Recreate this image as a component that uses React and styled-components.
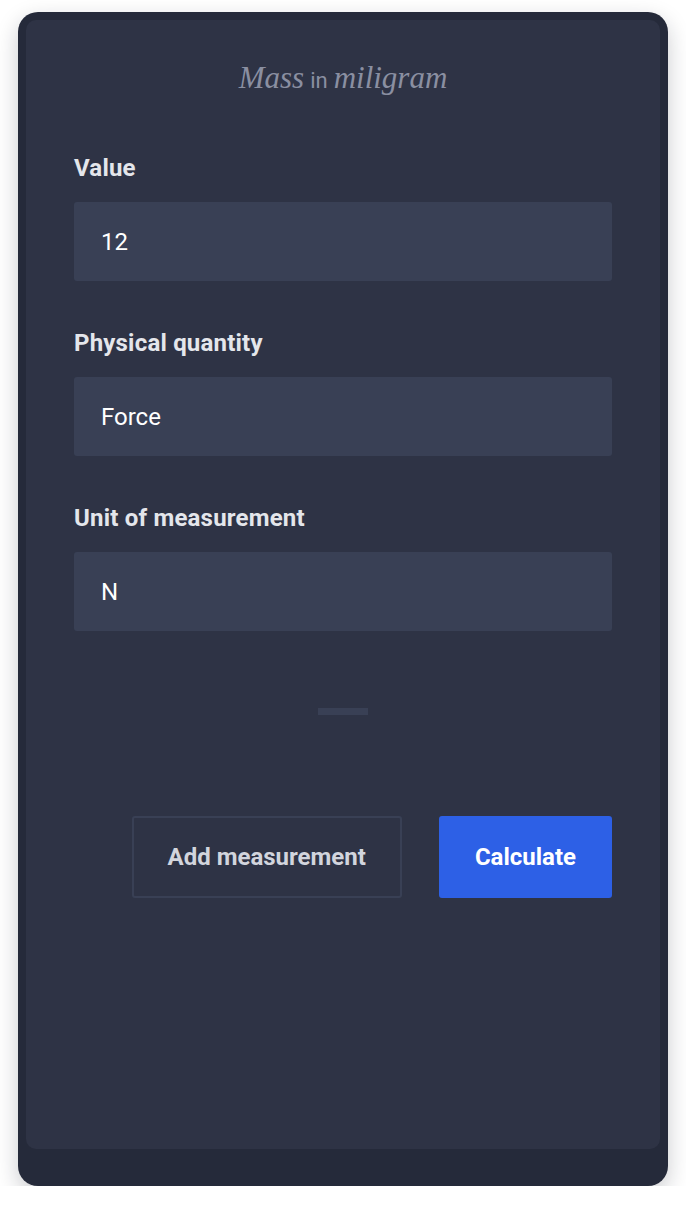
import styled, { createGlobalStyle } from "styled-components";

const GlobalStyle = createGlobalStyle`
	body {
		margin: 0;
		background: #ffffff;
		font-family: Roboto, "Liberation Sans", sans-serif;
	}
`;

const Card = styled.div`
	width: 650px;
	height: 1174px;
	margin: 12px 0 0 18px;
	padding: 8px 8px 37px;
	box-sizing: border-box;
	display: flex;
	background: #252a3a;
	border-radius: 20px;
	box-shadow: 0 8px 22px rgba(20, 24, 36, 0.22);
`;

const Panel = styled.div`
	flex: 1;
	display: flex;
	flex-direction: column;
	padding: 40px 48px 0;
	background: #2e3345;
	border-radius: 10px;
`;

const Title = styled.h2`
	margin: 0 0 55px;
	text-align: center;
	line-height: 36px;
	font-weight: 400;
	color: #8a8fa1;
	font-size: 31px;
`;

const Serif = styled.em`
	font-family: "Liberation Serif", serif;
	font-style: italic;
`;

const Small = styled.span`
	font-family: Roboto, sans-serif;
	font-size: 22px;
	margin: 0 6px;
`;

const Fields = styled.div`
	display: flex;
	flex-direction: column;
	gap: 48px;
`;

const Field = styled.div`
	display: flex;
	flex-direction: column;
	gap: 20px;
`;

const Label = styled.label`
	font-size: 24px;
	line-height: 28px;
	font-weight: 700;
	color: #e4e6eb;
	letter-spacing: 0.2px;
`;

const Input = styled.div`
	height: 79px;
	display: flex;
	align-items: center;
	padding: 0 27px;
	background: #394055;
	border-radius: 3px;
	font-size: 24px;
	color: #ffffff;
`;

const Divider = styled.div`
	width: 50px;
	height: 7px;
	margin: 77px auto 0;
	background: #394055;
`;

const Actions = styled.div`
	display: flex;
	justify-content: flex-end;
	gap: 37px;
	margin-top: 101px;
`;

const Button = styled.button`
	height: 82px;
	padding: 0 34px;
	border-radius: 3px;
	font-family: Roboto, "Liberation Sans", sans-serif;
	font-size: 24px;
	font-weight: 700;
	letter-spacing: 0;
	cursor: pointer;
	border: 2px solid ${(p) => (p.$primary ? "#2d60e6" : "#394055")};
	background: ${(p) => (p.$primary ? "#2d60e6" : "transparent")};
	color: ${(p) => (p.$primary ? "#ffffff" : "#d2d5dd")};
`;

const fields = [
	{ label: "Value", value: "12" },
	{ label: "Physical quantity", value: "Force" },
	{ label: "Unit of measurement", value: "N" },
];

const App = () => {
	return (
		<>
			<GlobalStyle />
			<Card>
				<Panel>
					<Title>
						<Serif>Mass</Serif>
						<Small>in</Small>
						<Serif>miligram</Serif>
					</Title>
					<Fields>
						{fields.map((f) => (
							<Field key={f.label}>
								<Label>{f.label}</Label>
								<Input>{f.value}</Input>
							</Field>
						))}
					</Fields>
					<Divider />
					<Actions>
						<Button>Add measurement</Button>
						<Button $primary>Calculate</Button>
					</Actions>
				</Panel>
			</Card>
		</>
	);
};

export default App;
